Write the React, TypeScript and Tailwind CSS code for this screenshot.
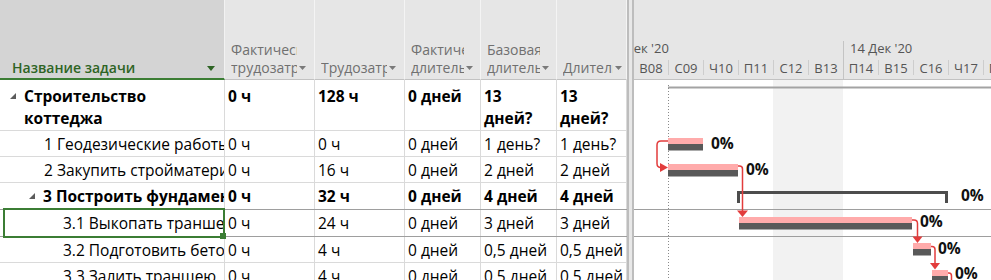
import React from 'react';

type Row = {
  h: string;
  name: string;
  pad: string;
  summary?: boolean;
  bold?: boolean;
  wrap?: boolean;
  cells: string[];
  selected?: boolean;
  dark?: boolean;
};

const rows: Row[] = [
  { h: 'h-[51px]', name: 'Строительство коттеджа', pad: 'pl-[10px]', summary: true, bold: true, wrap: true, cells: ['0 ч', '128 ч', '0 дней', '13 дней?', '13 дней?'] },
  { h: 'h-[26px]', name: '1 Геодезические работы', pad: 'pl-[44px]', cells: ['0 ч', '0 ч', '0 дней', '1 день?', '1 день?'] },
  { h: 'h-[26px]', name: '2 Закупить стройматериалы', pad: 'pl-[44px]', cells: ['0 ч', '16 ч', '0 дней', '2 дней', '2 дней'] },
  { h: 'h-[27px]', name: '3 Построить фундамент', pad: 'pl-[29px]', summary: true, bold: true, dark: true, cells: ['0 ч', '32 ч', '0 дней', '4 дней', '4 дней'] },
  { h: 'h-[27px]', name: '3.1 Выкопать траншею', pad: 'pl-[63px]', selected: true, dark: true, cells: ['0 ч', '24 ч', '0 дней', '3 дней', '3 дней'] },
  { h: 'h-[26px]', name: '3.2 Подготовить бетон', pad: 'pl-[63px]', cells: ['0 ч', '4 ч', '0 дней', '0,5 дней', '0,5 дней'] },
  { h: 'h-[26px]', name: '3.3 Залить траншею', pad: 'pl-[63px]', cells: ['0 ч', '4 ч', '0 дней', '0,5 дней', '0,5 дней'] },
];

const cols = [
  { w: 'w-[90px]', pr: 'pr-[8px]', lines: ['Фактические', 'трудозатраты'] },
  { w: 'w-[90px]', pr: 'pr-[8px]', lines: ['Трудозатраты'] },
  { w: 'w-[76px]', pr: 'pr-[7px]', lines: ['Фактическая', 'длительность'] },
  { w: 'w-[76px]', pr: 'pr-[7px]', lines: ['Базовая', 'длительность'] },
  { w: 'w-[70px]', pr: 'pr-[4px]', lines: ['Длительность'] },
];

const DAYS = ['В08', 'С09', 'Ч10', 'П11', 'С12', 'В13', 'П14', 'В15', 'С16', 'Ч17', 'П18'];

function Arrow({ color }: { color: string }) {
  return (
    <svg width="7" height="4" viewBox="0 0 7 4" className="ml-[2px] shrink-0">
      <path d="M0 0 H7 L3.5 4 Z" fill={color} />
    </svg>
  );
}

function Collapse() {
  return (
    <svg width="6" height="6" viewBox="0 0 6 6" className="shrink-0">
      <path d="M6 0 V6 H0 Z" fill="#5c5c5c" />
    </svg>
  );
}

function TableHeader() {
  return (
    <div className="flex h-[80px] shrink-0">
      <div className="w-[225px] shrink-0 bg-[#d4d4d4] border-b-2 border-b-[#3b7d34] border-r border-r-[#f2f2f2] flex items-end justify-between pl-[12px] pr-[9px] pb-[1px]">
        <span className="font-semibold text-[14px] leading-[18px] text-[#2e6424]">Название задачи</span>
        <span className="h-[18px] flex items-center">
          <svg width="8" height="5" viewBox="0 0 8 5">
            <path d="M0 0 H8 L4 5 Z" fill="#2e6424" />
          </svg>
        </span>
      </div>
      {cols.map((c, ci) => (
        <div
          key={ci}
          className={`${c.w} ${c.pr} shrink-0 bg-[#e6e6e6] border-b border-b-[#c2c2c2] border-r border-r-[#f4f4f4] flex flex-col justify-end pl-[6px] pb-[2px] text-[14px] leading-[18px] text-[#707070]`}
        >
          {c.lines.map((l, i) => (
            <div key={i} className="flex items-center">
              <span className="flex-1 min-w-0 overflow-hidden whitespace-nowrap">{l}</span>
              {i === c.lines.length - 1 ? <Arrow color="#7a7a7a" /> : <span className="w-[9px] shrink-0" />}
            </div>
          ))}
        </div>
      ))}
    </div>
  );
}

function TableRow({ r }: { r: Row }) {
  const line = r.dark ? 'border-b border-b-[#9e9e9e]' : 'border-b border-b-[#dadada]';
  const align = r.wrap ? 'items-start pt-[5px]' : 'items-center';
  return (
    <div className={`flex shrink-0 ${r.h} ${line} ${r.bold ? 'font-bold' : ''}`}>
      <div className={`relative w-[225px] shrink-0 border-r border-r-[#dadada] flex ${align} ${r.pad} leading-[22px]`}>
        {r.summary && (
          <span className="h-[22px] flex items-center mr-[8px] shrink-0">
            <Collapse />
          </span>
        )}
        <span className={`min-w-0 overflow-hidden ${r.wrap ? 'block w-min' : 'whitespace-nowrap'}`}>{r.name}</span>
        {r.selected && (
          <div className="absolute left-[3px] top-[-2px] right-[-1px] bottom-[-2px] border-2 border-[#3b7d34] z-10 pointer-events-none">
            <div className="absolute right-[-3px] bottom-[-3px] w-[6px] h-[6px] bg-[#3b7d34]" />
          </div>
        )}
      </div>
      {r.cells.map((t, i) => (
        <div
          key={i}
          className={`${cols[i].w} shrink-0 border-r border-r-[#dadada] pl-[3px] flex ${align} leading-[22px] overflow-hidden`}
        >
          <span className={r.wrap && i >= 3 ? 'block w-min' : 'whitespace-nowrap'}>{t}</span>
        </div>
      ))}
    </div>
  );
}

function GanttHeader() {
  return (
    <div className="h-[80px] shrink-0 bg-[#e6e6e6] border-b border-b-[#c2c2c2] flex flex-col text-[13px] text-[#555555]">
      <div className="h-[41px] shrink-0" />
      <div className="h-[17px] shrink-0 flex">
        <div className="w-[210px] shrink-0 border-r border-r-[#c4c4c4] overflow-hidden whitespace-nowrap">
          <span className="block ml-[-20px] leading-[15px]">7 Дек '20</span>
        </div>
        <div className="w-[245px] shrink-0 pl-[6px] whitespace-nowrap leading-[15px]">14 Дек '20</div>
      </div>
      <div className="flex-1 flex">
        {DAYS.map((d, i) => (
          <div key={d} className="w-[35px] shrink-0 flex">
            <span className="flex-1 text-center leading-[21px] whitespace-nowrap">{d}</span>
            {i === 5 ? (
              <div className="w-px self-stretch bg-[#c4c4c4]" />
            ) : (
              <div className="w-px h-[15px] mt-[2px] bg-[#cdcdcd]" />
            )}
          </div>
        ))}
      </div>
    </div>
  );
}

const PINK = '#ffabab';
const GRAY = '#595959';
const RED = '#e23c3c';

function Bar({ x1, x2, y }: { x1: number; x2: number; y: number }) {
  return (
    <g>
      <rect x={x1} y={y} width={x2 - x1} height={6} fill={PINK} />
      <rect x={x1} y={y + 6} width={x2 - x1} height={6.5} fill={GRAY} />
    </g>
  );
}

function Label({ x, y }: { x: number; y: number }) {
  return (
    <text x={x} y={y} fontFamily="'Open Sans', sans-serif" fontWeight={700} fontSize={15.5} fill="#111111">
      0%
    </text>
  );
}

function GanttBody() {
  return (
    <div className="relative flex-1">
      <svg className="absolute left-0 top-0" width="357" height="200">
        <rect x={139} y={0} width={70} height={200} fill="#f2f2f2" />
      </svg>
      <div className="relative flex flex-col">
        {rows.map((r, i) => (
          <div key={i} className={`shrink-0 ${r.h} border-b ${r.dark ? 'border-b-[#9e9e9e]' : 'border-b-transparent'}`} />
        ))}
      </div>
      <svg className="absolute left-0 top-0 pointer-events-none" width="357" height="200">
        <g transform="translate(-634 -80)">
          <line x1={668} y1={87.5} x2={991} y2={87.5} stroke="#a3a3a3" strokeWidth={2} />
          <line x1={668.5} y1={85} x2={668.5} y2={280} stroke="#8a8a8a" strokeWidth={1} strokeDasharray="1 2" />

          <Bar x1={668} x2={703} y={138} />
          <Bar x1={668} x2={738} y={164} />
          <rect x={737} y={191} width={211} height={3} fill="#4d4d4d" />
          <rect x={737} y={191} width={3} height={12} fill="#4d4d4d" />
          <rect x={945} y={191} width={3} height={12} fill="#4d4d4d" />
          <Bar x1={739} x2={912} y={217} />
          <Bar x1={913} x2={931} y={243} />
          <Bar x1={932} x2={948} y={270} />

          <g fill="none" stroke={RED} strokeWidth={1.5}>
            <path d="M668 141 H661 Q657 141 657 145 V163.5 Q657 167.5 661 167.5 H662" />
            <path d="M738 166 H739.5 Q742.5 166 742.5 169 V211" />
            <path d="M912 220 H914 Q917.5 220 917.5 223.5 V237" />
            <path d="M931 246.5 H932 Q935 246.5 935 249.5 V264" />
            <path d="M948 273 H949 Q951.5 273 951.5 276 V284" />
          </g>
          <g fill={RED}>
            <polygon points="660,163 668,167.5 660,172" />
            <polygon points="737,210.5 748,210.5 742.5,217" />
            <polygon points="912.5,236.5 922.5,236.5 917.5,243" />
            <polygon points="930,263 940,263 935,269.5" />
          </g>

          <Label x={711} y={148.5} />
          <Label x={746} y={174.5} />
          <Label x={961} y={200.5} />
          <Label x={920} y={227} />
          <Label x={938} y={253.5} />
          <Label x={955} y={279} />
        </g>
      </svg>
    </div>
  );
}

export default function App() {
  return (
    <div className="w-[991px] h-[280px] overflow-hidden bg-white flex font-['Open_Sans',sans-serif] text-[15.5px] text-black">
      <div className="w-[627px] shrink-0 flex flex-col">
        <TableHeader />
        {rows.map((r, i) => (
          <TableRow key={i} r={r} />
        ))}
      </div>
      <div className="w-[7px] shrink-0 h-full border-x-2 border-x-[#bdbdbd] bg-[#e8e8e8]" />
      <div className="flex-1 min-w-0 flex flex-col overflow-hidden">
        <GanttHeader />
        <GanttBody />
      </div>
    </div>
  );
}
